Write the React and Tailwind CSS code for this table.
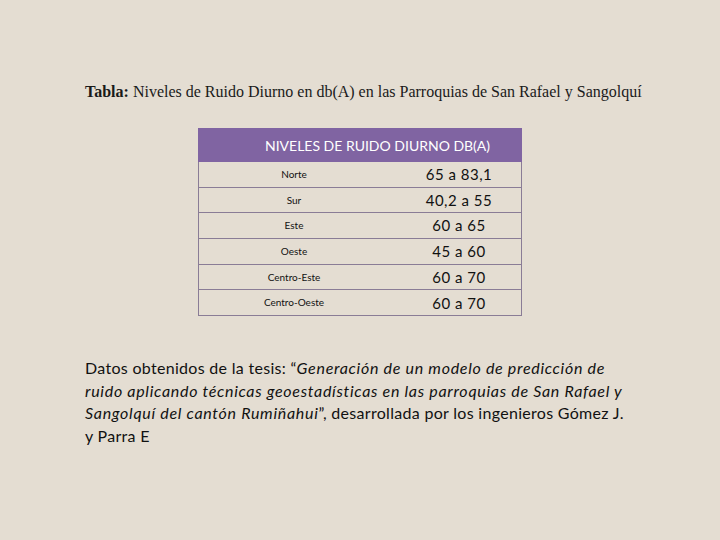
const rows = [
    ["Norte", "65 a 83,1"],
    ["Sur", "40,2 a 55"],
    ["Este", "60 a 65"],
    ["Oeste", "45 a 60"],
    ["Centro-Este", "60 a 70"],
    ["Centro-Oeste", "60 a 70"],
];

const App = () => {
    return (
        <div className="w-[720px] h-[540px] bg-[#e4ddd2] overflow-hidden pt-[82px] pl-[85px]">
            {/* Caption */}
            <p className="font-['Liberation_Serif',serif] text-[16px] leading-[20px] text-[#1a1a1a]">
                <span className="font-bold">Tabla:</span> Niveles de Ruido Diurno en db(A) en las Parroquias de San Rafael y Sangolquí
            </p>

            {/* Table */}
            <div className="ml-[113px] mt-[26px] w-[324px] font-['Lato',sans-serif]">
                <div className="h-[34px] bg-[#8064a2] flex items-center pl-[67px] text-white text-[14px]">
                    NIVELES DE RUIDO DIURNO DB(A)
                </div>
                <div className="border-x border-[#8a7c96]">
                    {rows.map(([zona, valor]) => (
                        <div key={zona} className="h-[25.7px] flex items-center border-b border-[#8a7c96]">
                            <div className="w-[190px] text-center text-[10px] text-[#111]">{zona}</div>
                            <div className="flex-1 text-center pl-[8px] text-[15px] text-[#111] tracking-[0.5px]">{valor}</div>
                        </div>
                    ))}
                </div>
            </div>

            {/* Source */}
            <p className="mt-[41px] w-[544px] font-['Lato',sans-serif] text-[16px] leading-[22.5px] text-[#111] tracking-[0.3px]">
                Datos obtenidos de la tesis: “<i className="tracking-[0.7px]">Generación de un modelo de predicción de ruido aplicando técnicas geoestadísticas en las parroquias de San Rafael y Sangolquí del cantón Rumiñahui</i>”, desarrollada por los ingenieros Gómez J. y Parra E
            </p>
        </div>
    );
};

export default App;
